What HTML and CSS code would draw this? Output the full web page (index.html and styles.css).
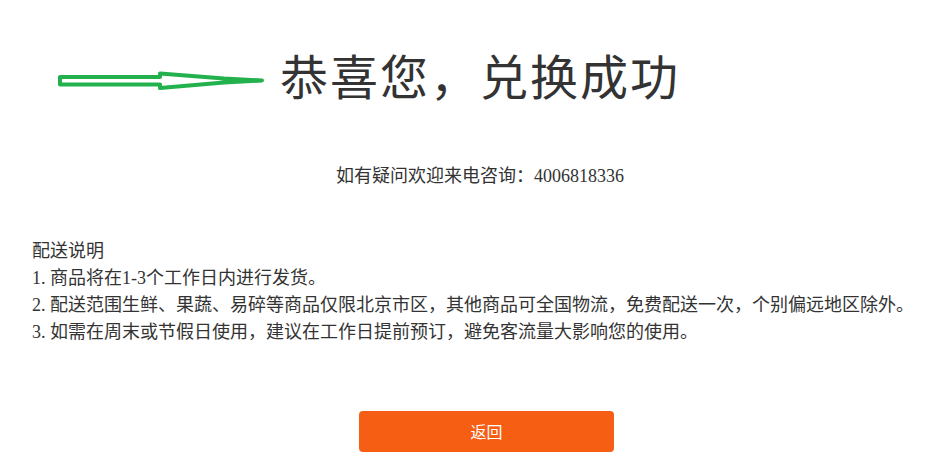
FILE: index.html
```html
<!DOCTYPE html>
<html lang="zh-cn">

<head>
    <meta charset="UTF-8">
    <meta name="viewport" content="width=device-width, initial-scale=1.0">
    <title>兑换成功</title>
    <link rel="stylesheet" href="styles.css">
</head>

<body>
    <div class="page">
        <div class="head">
            <svg class="arrow" width="210" height="24" viewBox="56 68 210 24">
                <path d="M60,77 L160,77 L160,73.5 L224,78.5 L262,80.5 L224,82.5 L160,88 L160,84.5 L60,84.5 Z"
                    fill="none" stroke="#22b14c" stroke-width="4" stroke-linejoin="round" />
            </svg>
            <h1 class="title">恭喜您，兑换成功</h1>
        </div>
        <p class="tel">如有疑问欢迎来电咨询：4006818336</p>
        <div class="notes">
            <p>配送说明</p>
            <p><span class="no">1.</span>商品将在1-3个工作日内进行发货。</p>
            <p><span class="no">2.</span>配送范围生鲜、果蔬、易碎等商品仅限北京市区，其他商品可全国物流，免费配送一次，个别偏远地区除外。</p>
            <p><span class="no">3.</span>如需在周末或节假日使用，建议在工作日提前预订，避免客流量大影响您的使用。</p>
        </div>
        <div class="foot">
            <a class="btn" href="#">返回</a>
        </div>
    </div>
</body>

</html>
```

FILE: styles.css
```css
html,
body {
    margin: 0;
    padding: 0;
    background-color: #fff;
    color: #333;
    font-family: "Liberation Serif", "Noto Sans CJK SC", serif;
}

.page {
    padding: 44px 24px 0 32px;
}

.head {
    position: relative;
    text-align: center;
}

.arrow {
    position: absolute;
    left: 24px;
    top: 24px;
}

.title {
    margin: 0;
    font-size: 48px;
    line-height: 60px;
    font-weight: normal;
    letter-spacing: 2px;
    color: #333;
    font-family: "Noto Sans CJK SC", serif;
}

p {
    margin: 0;
}

.tel {
    margin-top: 59px;
    text-align: center;
    font-size: 18px;
    line-height: 27px;
}

.notes {
    margin-top: 48px;
    font-size: 18px;
    line-height: 27px;
}

.no {
    display: inline-block;
    width: 18px;
}

.foot {
    display: flex;
    justify-content: center;
    margin-top: 65px;
}

.btn {
    display: block;
    margin-left: 13px;
    width: 255px;
    height: 41px;
    line-height: 41px;
    text-align: center;
    background-color: #f65e14;
    border-radius: 4px;
    color: #fff;
    font-size: 16px;
    text-decoration: none;
    font-family: "Noto Sans CJK SC", sans-serif;
}
```
